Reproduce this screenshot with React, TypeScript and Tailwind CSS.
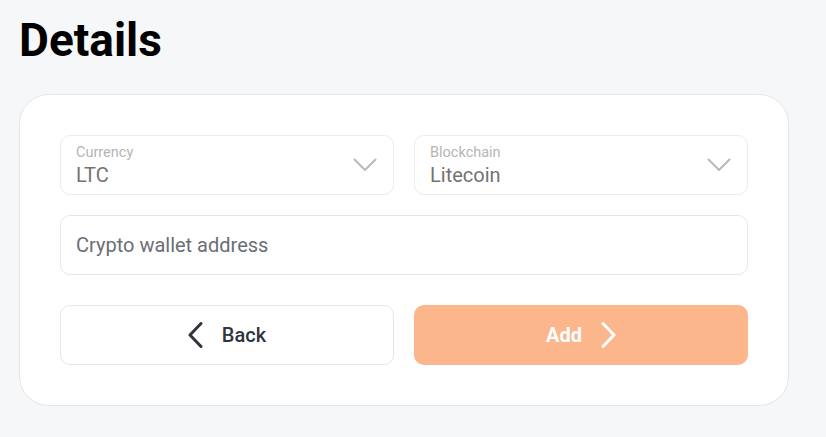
import React from "react";

const ChevronDown = () => (
  <svg width="24" height="14" viewBox="0 0 24 14" fill="none">
    <path d="M1.5 1.5L12 12L22.5 1.5" stroke="#b9b9b9" strokeWidth="2" strokeLinecap="round" strokeLinejoin="round" />
  </svg>
);

const Select = ({ label, value }: { label: string; value: string }) => (
  <div className="h-[60px] rounded-[10px] border border-[#ececec] bg-white flex items-center justify-between pl-[15px] pr-[16px]">
    <div className="flex flex-col">
      <span className="text-[14.5px] leading-[17px] text-[#b5b5b5]">{label}</span>
      <span className="text-[20px] leading-[24px] text-[#737373] mt-[2px]">{value}</span>
    </div>
    <ChevronDown />
  </div>
);

export default function App() {
  return (
    <div className="min-h-screen w-full bg-[#f6f7f9] pt-[13px] pl-[19px] pr-[37px] pb-[32px]" style={{ fontFamily: "Roboto, 'Noto Sans', sans-serif" }}>
      <h1 className="text-[46px] leading-[54px] font-bold text-black">Details</h1>
      <div className="mt-[27px] rounded-[30px] border border-[#e6e6e6] bg-white p-[40px]">
        <div className="grid grid-cols-2 gap-[20px]">
          <Select label="Currency" value="LTC" />
          <Select label="Blockchain" value="Litecoin" />
        </div>
        <div className="mt-[20px] h-[60px] rounded-[10px] border border-[#e6e6e6] bg-white flex items-center pl-[15px]">
          <span className="text-[20px] text-[#6b6e75]">Crypto wallet address</span>
        </div>
        <div className="mt-[30px] grid grid-cols-2 gap-[20px]">
          <button className="h-[60px] rounded-[10px] border border-[#e6e6e6] bg-white flex items-center justify-center gap-[18px]">
            <svg width="16" height="26" viewBox="0 0 16 26" fill="none">
              <path d="M13 1.5L2 13L13 24.5" stroke="#2f3440" strokeWidth="3" strokeLinecap="round" strokeLinejoin="round" />
            </svg>
            <span className="text-[20px] font-medium text-[#2f3440]">Back</span>
          </button>
          <button className="h-[60px] rounded-[10px] bg-[#fbb68c] flex items-center justify-center gap-[18px]">
            <span className="text-[20px] font-bold text-white">Add</span>
            <svg width="16" height="26" viewBox="0 0 16 26" fill="none">
              <path d="M3 1.5L14 13L3 24.5" stroke="#ffffff" strokeWidth="3" strokeLinecap="round" strokeLinejoin="round" />
            </svg>
          </button>
        </div>
      </div>
    </div>
  );
}
